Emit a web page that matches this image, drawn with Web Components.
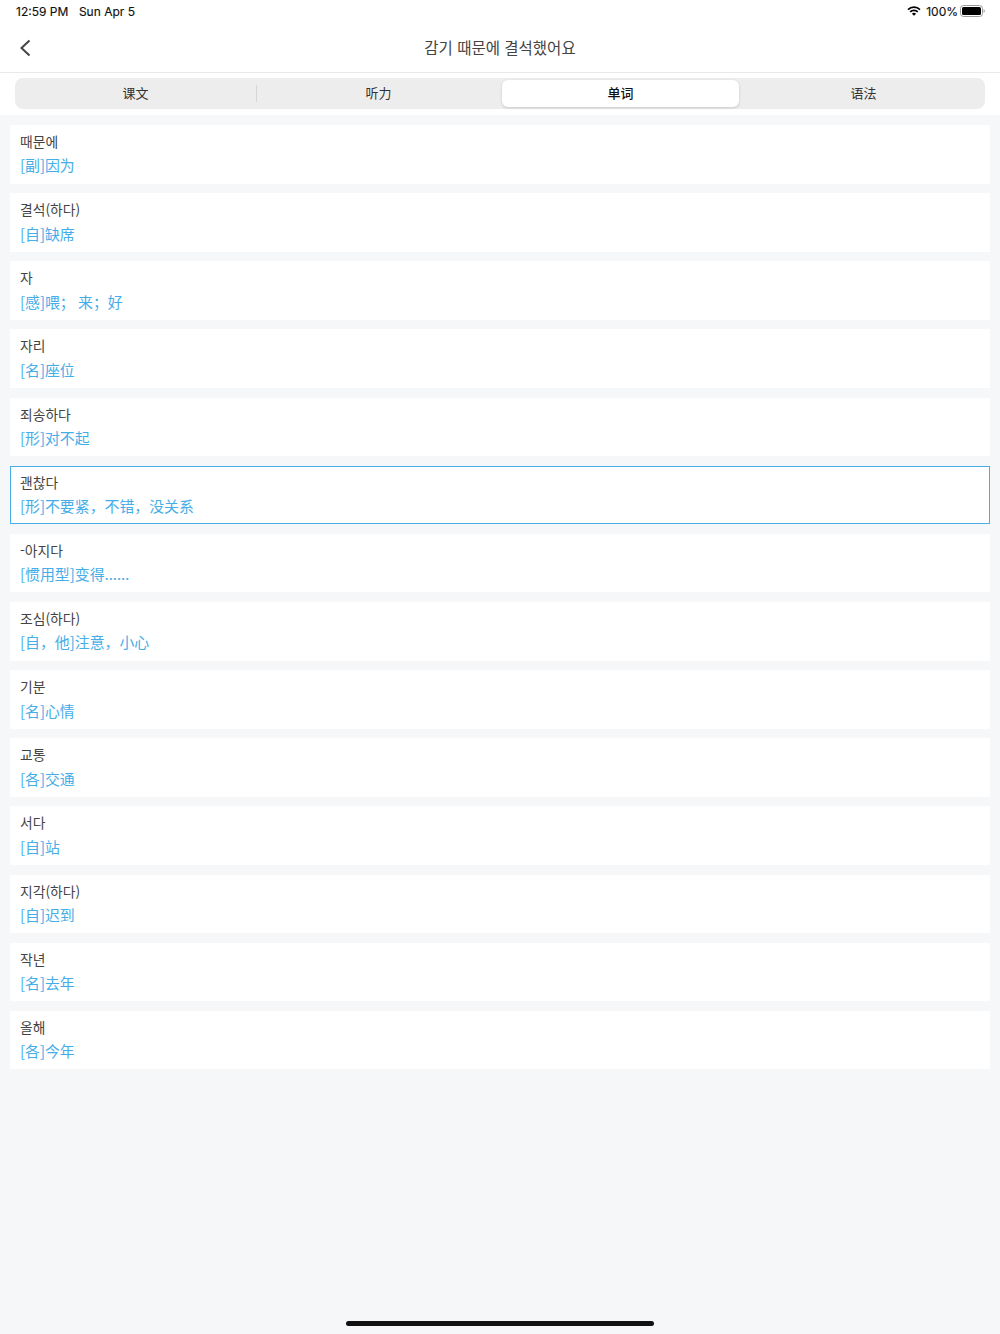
<!DOCTYPE html>
<html lang="ko">
<head>
<meta charset="utf-8">
<title>단어</title>
<style>
  html, body { margin: 0; height: 100%; }
  body {
    background: #f6f7f9;
    font-family: Inter, "Noto Sans CJK KR", "Noto Sans CJK SC", sans-serif;
  }
  #app { display: flex; flex-direction: column; width: 1000px; height: 1334px; overflow: hidden; }
</style>
</head>
<body>
<div id="app">
  <status-bar></status-bar>
  <nav-bar title="감기 때문에 결석했어요"></nav-bar>
  <tab-bar active="2"></tab-bar>
  <word-list>
    <word-card word="때문에" meaning="[副]因为"></word-card>
    <word-card word="결석(하다)" meaning="[自]缺席"></word-card>
    <word-card word="자" meaning="[感]喂； 来；好"></word-card>
    <word-card word="자리" meaning="[名]座位"></word-card>
    <word-card word="죄송하다" meaning="[形]对不起"></word-card>
    <word-card word="괜찮다" meaning="[形]不要紧，不错，没关系" selected></word-card>
    <word-card word="-아지다" meaning="[惯用型]变得......"></word-card>
    <word-card word="조심(하다)" meaning="[自，他]注意，小心"></word-card>
    <word-card word="기분" meaning="[名]心情"></word-card>
    <word-card word="교통" meaning="[各]交通"></word-card>
    <word-card word="서다" meaning="[自]站"></word-card>
    <word-card word="지각(하다)" meaning="[自]迟到"></word-card>
    <word-card word="작년" meaning="[名]去年"></word-card>
    <word-card word="올해" meaning="[各]今年"></word-card>
  </word-list>
  <home-bar></home-bar>
</div>

<script>
class StatusBar extends HTMLElement {
    constructor() {
        super();
        this.shadow = this.attachShadow({mode: 'open'});
        this.shadow.innerHTML = `
        <style>
            :host{
                display:flex;
                justify-content:space-between;
                align-items:center;
                height:24px;
                padding:0 15px 2px 16px;
                box-sizing:border-box;
                background:#fff;
                color:#111;
                font:400 12px "Inter", sans-serif;
                -webkit-text-stroke:.15px #111;
            }
            .left{ display:flex; gap:10.6px; }
            .right{ display:flex; align-items:center; gap:2px; }
            .wifi{ margin-right:3px; }
            svg{ display:block; }
        </style>
        <div class="left"><span>12:59 PM</span><span>Sun Apr 5</span></div>
        <div class="right">
            <svg class="wifi" width="14" height="10" viewBox="0 0 14 10">
                <path d="M1 3.6a8.6 8.6 0 0 1 12 0" fill="none" stroke="#000" stroke-width="1.7"/>
                <path d="M3.2 5.9a5.4 5.4 0 0 1 7.6 0" fill="none" stroke="#000" stroke-width="1.7"/>
                <path d="M7 9.8 4.9 7.7a3 3 0 0 1 4.2 0z" fill="#000"/>
            </svg>
            <span>100%</span>
            <svg width="25" height="12" viewBox="0 0 25 12">
                <rect x=".5" y=".5" width="22" height="11" rx="3" fill="none" stroke="#9a9a9a"/>
                <rect x="2" y="2" width="19" height="8" rx="1.6" fill="#000"/>
                <path d="M23.6 4.2c.8.3 1.2 1 1.2 1.8s-.4 1.5-1.2 1.8z" fill="#9a9a9a"/>
            </svg>
        </div>
        `;
    }
}

class NavBar extends HTMLElement {
    constructor() {
        super();
        this.shadow = this.attachShadow({mode: 'open'});
    }
    connectedCallback() {
        this.shadow.innerHTML = `
        <style>
            :host{
                display:flex;
                align-items:center;
                justify-content:center;
                position:relative;
                padding-bottom:2px;
                height:46px;
                background:#fff;
                border-bottom:1px solid #e9e9e9;
                color:#444;
                font:400 15.5px "Noto Sans CJK KR", sans-serif;
            }
            svg{ position:absolute; left:19px; top:15px; }
        </style>
        <svg width="13" height="18" viewBox="0 0 13 18">
            <path d="M10.5 1.5 2.5 9l8 7.5" fill="none" stroke="#444" stroke-width="2"/>
        </svg>
        <span>${this.getAttribute('title')}</span>
        `;
    }
}

class TabBar extends HTMLElement {
    constructor() {
        super();
        this.shadow = this.attachShadow({mode: 'open'});
    }
    connectedCallback() {
        const active = Number(this.getAttribute('active'));
        const tabs = ['课文', '听力', '单词', '语法'].map((name, i) =>
            `<div class="tab ${i === active ? 'on' : ''} ${i === 0 ? 'line' : ''}"><span>${name}</span></div>`).join('');
        this.shadow.innerHTML = `
        <style>
            :host{
                display:block;
                padding:5px 15px 6px;
                background:#fff;
            }
            .tabs{
                display:grid;
                grid-template-columns:243px 243px 243px 241px;
                height:31px;
                background:#ededed;
                border-radius:8px;
                padding:2px 0;
                box-sizing:border-box;
            }
            .tab{
                display:flex;
                align-items:center;
                justify-content:center;
                position:relative;
                padding-bottom:2px;
                padding-right:2px;
                color:#333;
                font:400 13px "Noto Sans CJK SC", sans-serif;
            }
            .on{
                background:#fff;
                border-radius:6px;
                margin:0 5px 0 1px;
                padding-right:0;
                box-shadow:0 1px 3px rgba(0,0,0,.16);
                color:#111;
                font-weight:500;
            }
            .line::after{
                content:"";
                position:absolute;
                right:1px;
                top:5px;
                bottom:5px;
                border-right:1px solid #d6d6d6;
            }
        </style>
        <div class="tabs" lang="zh-Hans">${tabs}</div>
        `;
    }
}

class WordList extends HTMLElement {
    constructor() {
        super();
        this.attachShadow({mode: 'open'}).innerHTML = `
        <style>
            :host{
                display:flex;
                flex-direction:column;
                gap:9.55px;
                flex:1;
                padding:10px 10px 0;
                background:#f6f7f9;
            }
        </style>
        <slot></slot>
        `;
    }
}

class WordCard extends HTMLElement {
    constructor() {
        super();
        this.shadow = this.attachShadow({mode: 'open'});
    }
    connectedCallback() {
        this.shadow.innerHTML = `
        <style>
            :host{
                display:block;
                box-sizing:border-box;
                height:58.6px;
                padding:4px 10px 0;
                background:#fff;
            }
            :host([selected]){
                border:1px solid #46ade8;
                padding:3px 9px 0;
            }
            .word{
                height:24.4px;
                color:#444;
                font:400 13.8px/24px "Noto Sans CJK KR", sans-serif;
            }
            .meaning{
                height:24px;
                color:#45ade8;
                font:400 14.9px/24px "Noto Sans CJK SC", sans-serif;
            }
        </style>
        <div class="word">${this.getAttribute('word')}</div>
        <div class="meaning" lang="zh-Hans">${this.getAttribute('meaning')}</div>
        `;
    }
}

class HomeBar extends HTMLElement {
    constructor() {
        super();
        this.attachShadow({mode: 'open'}).innerHTML = `
        <style>
            :host{
                display:flex;
                justify-content:center;
                height:13px;
                background:#f6f7f9;
            }
            div{
                width:308px;
                height:5px;
                border-radius:3px;
                background:#111;
            }
        </style>
        <div></div>
        `;
    }
}

customElements.define('status-bar', StatusBar);
customElements.define('nav-bar', NavBar);
customElements.define('tab-bar', TabBar);
customElements.define('word-list', WordList);
customElements.define('word-card', WordCard);
customElements.define('home-bar', HomeBar);
</script>
</body>
</html>
